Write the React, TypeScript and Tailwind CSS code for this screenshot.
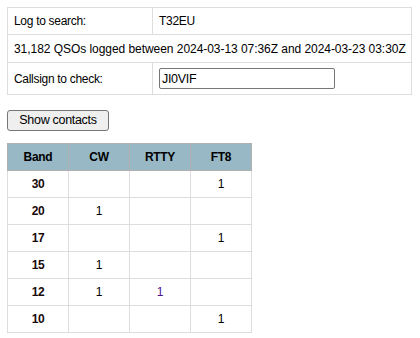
import React from "react";

const rows = [
  { band: "30", cw: "", rtty: "", ft8: "1" },
  { band: "20", cw: "1", rtty: "", ft8: "" },
  { band: "17", cw: "", rtty: "", ft8: "1" },
  { band: "15", cw: "1", rtty: "", ft8: "" },
  { band: "12", cw: "1", rtty: "1", ft8: "" },
  { band: "10", cw: "", rtty: "", ft8: "1" },
];

export default function App() {
  return (
    <div className="p-[7px] bg-white text-[12px] tracking-[-0.3px] text-black font-['Liberation_Sans',Arial,sans-serif]">
      <table className="border-collapse w-[405px] table-fixed">
        <tbody>
          <tr className="h-[27px]">
            <td className="border border-[#dddddd] px-[6px] w-[145px]">Log to search:</td>
            <td className="border border-[#dddddd] px-[6px]">T32EU</td>
          </tr>
          <tr className="h-[28px]">
            <td colSpan={2} className="border border-[#dddddd] pl-[6px] pr-0 whitespace-nowrap tracking-[-0.05px]">
              31,182 QSOs logged between 2024-03-13 07:36Z and 2024-03-23 03:30Z
            </td>
          </tr>
          <tr className="h-[32px]">
            <td className="border border-[#dddddd] px-[6px]">Callsign to check:</td>
            <td className="border border-[#dddddd] px-[6px]">
              <input
                defaultValue="JI0VIF"
                className="w-[176px] h-[21px] border border-[#767676] rounded-[2px] px-[2px] text-[12.5px] tracking-[-0.3px] outline-none"
              />
            </td>
          </tr>
        </tbody>
      </table>

      <div className="mt-[15px]">
        <button className="h-[21px] w-[102px] bg-[#efefef] border border-[#767676] rounded-[3px] text-[12.5px] leading-none">
          Show contacts
        </button>
      </div>

      <table className="border-collapse mt-[12px] text-center">
        <thead>
          <tr className="h-[27px] bg-[#98b8c6]">
            {["Band", "CW", "RTTY", "FT8"].map((h) => (
              <th key={h} className="w-[61px] border border-[#b0b0b0] font-bold">
                {h}
              </th>
            ))}
          </tr>
        </thead>
        <tbody>
          {rows.map((r) => (
            <tr key={r.band} className="h-[27px]">
              <td className="border border-[#dddddd] font-bold text-[#1a0a0a]">{r.band}</td>
              <td className="border border-[#dddddd]">{r.cw}</td>
              <td className="border border-[#dddddd] text-[#4a148c]">{r.rtty}</td>
              <td className="border border-[#dddddd]">{r.ft8}</td>
            </tr>
          ))}
        </tbody>
      </table>
    </div>
  );
}
